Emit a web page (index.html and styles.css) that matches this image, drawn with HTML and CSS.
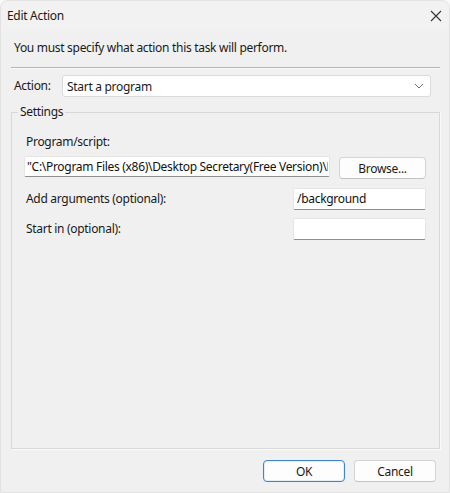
FILE: index.html
```html
<!DOCTYPE html>
<html>
<head>
<meta charset="utf-8">
<link rel="stylesheet" href="styles.css">
</head>
<body>
<div class="window">
  <div class="titlebar">
    <span class="title">Edit Action</span>
    <svg class="close" width="12" height="12" viewBox="0 0 12 12"><path d="M1 1 L11 11 M11 1 L1 11" stroke="#333" stroke-width="1.1" fill="none"/></svg>
  </div>
  <div class="content">
    <div class="instruction">You must specify what action this task will perform.</div>
    <div class="separator"></div>
    <div class="action-row">
      <span class="action-label">Action:</span>
      <div class="select">
        <span>Start a program</span>
        <svg class="chevron" width="10" height="6" viewBox="0 0 10 6"><path d="M1 1 L5 5 L9 1" stroke="#707070" stroke-width="1" fill="none"/></svg>
      </div>
    </div>
    <fieldset class="group">
      <legend>Settings</legend>
      <div class="label prog-label">Program/script:</div>
      <div class="path-row">
        <div class="input path-input"><span class="path-text">"C:\Program Files (x86)\Desktop Secretary(Free Version)\D</span></div>
        <button class="btn browse">Browse...</button>
      </div>
      <div class="field-row args-row">
        <span class="label">Add arguments (optional):</span>
        <div class="input small-input">/background</div>
      </div>
      <div class="field-row start-row">
        <span class="label">Start in (optional):</span>
        <div class="input small-input"></div>
      </div>
    </fieldset>
  </div>
  <div class="footer">
    <button class="btn ok">OK</button>
    <button class="btn cancel">Cancel</button>
  </div>
</div>
</body>
</html>
```

FILE: styles.css
```css
* { box-sizing: border-box; }
html, body {
  margin: 0;
  padding: 0;
  width: 450px;
  height: 493px;
  background: #f9f9f9;
  overflow: hidden;
}
body {
  font-family: "Noto Sans", "Open Sans", sans-serif;
  font-size: 12px;
  letter-spacing: -0.3px;
  color: #1a1a1a;
}
.window {
  width: 450px;
  height: 493px;
  background: #f0f0f0;
  border: 1px solid #e2e2e2;
  border-radius: 8px 8px 0 0;
  display: flex;
  flex-direction: column;
  overflow: hidden;
}
.titlebar {
  height: 30px;
  flex: none;
  background: #f2f2f2;
  display: flex;
  align-items: center;
  justify-content: space-between;
  padding: 0 6px 0 6px;
}
.title {
  font-size: 12px;
  line-height: 16px;
  color: #1a1a1a;
}
.close {
  margin-right: 1px;
}
.content {
  flex: 1;
  display: flex;
  flex-direction: column;
  padding: 0 9px 0 10px;
}
.instruction {
  margin-top: 9px;
  line-height: 16px;
  padding-left: 3px;
}
.separator {
  margin-top: 11px;
  height: 2px;
  border-top: 1px solid #b4b4b4;
  border-bottom: 1px solid #fbfbfb;
}
.action-row {
  margin-top: 6px;
  display: flex;
  align-items: center;
  height: 22px;
}
.action-label {
  width: 51px;
  padding-left: 3px;
  line-height: 16px;
}
.select {
  flex: 1;
  height: 22px;
  margin-right: 9px;
  background: #fff;
  border: 1px solid #dadada;
  border-radius: 3px;
  display: flex;
  align-items: center;
  justify-content: space-between;
  padding: 0 6px 0 4px;
}
.chevron { display: block; }
.group {
  flex: 1;
  margin: 7px 0 0 0;
  padding: 0 13px 0 12px;
  border: 1px solid #d8d8d8;
  box-shadow: 1px 1px 0 #fafafa;
  min-width: 0;
}
.group legend {
  padding: 0 2px;
  margin-left: -6px;
  line-height: 16px;
}
.label {
  line-height: 16px;
}
.prog-label {
  margin-top: 14px;
  padding-left: 2px;
}
.path-row {
  margin-top: 6px;
  display: flex;
  align-items: flex-start;
  gap: 9px;
}
.input {
  background: #fff;
  border: 1px solid #e6e6e6;
  border-bottom: 1px solid #8e8e8e;
  border-radius: 2px;
  height: 21px;
  line-height: 19px;
  padding: 0 3px;
  white-space: nowrap;
  overflow: hidden;
  color: #111;
}
.path-input {
  width: 306px;
  flex: none;
  padding: 0 1px 0 2px;
}
.path-text {
  display: block;
  overflow: hidden;
  white-space: nowrap;
}
.btn {
  font-family: inherit;
  font-size: 12px;
  letter-spacing: -0.3px;
  color: #1a1a1a;
  background: #fdfdfd;
  border: 1px solid #d4d4d4;
  border-bottom-color: #c2c2c2;
  border-radius: 4px;
  height: 22px;
  padding: 0;
  margin: 0;
}
.browse {
  width: 87px;
  margin-top: 1px;
}
.field-row {
  display: flex;
  align-items: center;
  justify-content: space-between;
  padding-left: 2px;
}
.args-row { margin-top: 9px; }
.start-row { margin-top: 8px; }
.small-input {
  width: 133px;
  height: 22px;
  line-height: 20px;
}
.footer {
  flex: none;
  display: flex;
  justify-content: flex-end;
  gap: 9px;
  padding: 11px 13px 10px 0;
}
.ok, .cancel {
  width: 82px;
}
.ok {
  border: 1px solid #3f84c6;
  box-shadow: inset 0 0 0 1px #e4eef8;
}
```
